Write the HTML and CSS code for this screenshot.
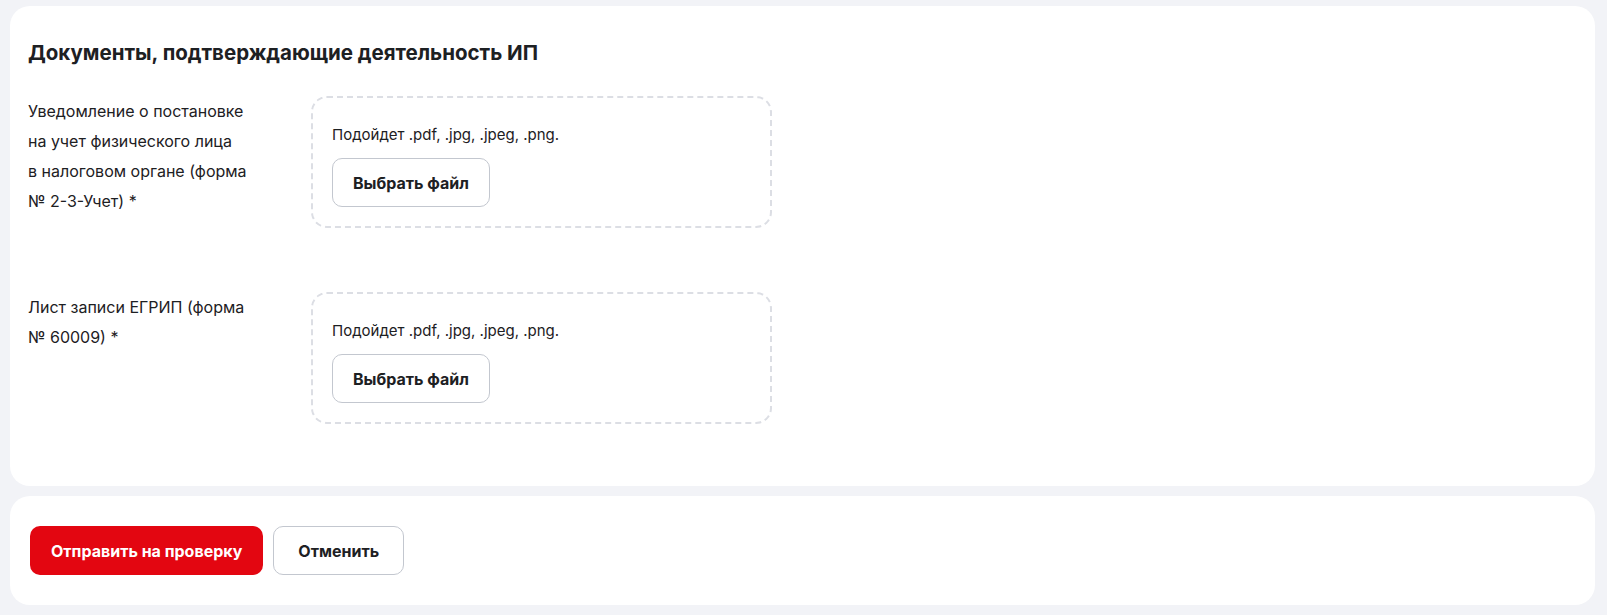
FILE: index.html
```html
<!doctype html>
<html>
<head>
	<meta charset="utf-8">
	<title>Документы ИП</title>
	<link rel="stylesheet" href="styles.css">
</head>

<body>
	<div class="page">
		<section class="card docs">
			<h2 class="docs-title">Документы, подтверждающие деятельность ИП</h2>

			<div class="doc-row">
				<div class="doc-label">Уведомление о постановке<br>на учет физического лица<br>в налоговом органе (форма<br>№ 2-3-Учет) *</div>
				<div class="dropzone">
					<p class="dropzone-hint">Подойдет .pdf, .jpg, .jpeg, .png.</p>
					<button class="btn btn-outline" type="button">Выбрать файл</button>
				</div>
			</div>

			<div class="doc-row">
				<div class="doc-label">Лист записи ЕГРИП (форма<br>№ 60009) *</div>
				<div class="dropzone">
					<p class="dropzone-hint">Подойдет .pdf, .jpg, .jpeg, .png.</p>
					<button class="btn btn-outline" type="button">Выбрать файл</button>
				</div>
			</div>
		</section>

		<section class="card actions">
			<button class="btn btn-red" type="button">Отправить на проверку</button>
			<button class="btn btn-outline" type="button">Отменить</button>
		</section>
	</div>
</body>
</html>
```

FILE: styles.css
```css
html{
	background-color: #f2f3f7;
}
body,html{
	padding: 0;
	margin: 0;
	font-family: Inter, "Noto Sans", sans-serif;
	color: #1d2023;
}
.page{
	display: flex;
	flex-direction: column;
	gap: 10px;
	padding: 6px 12px 9px 10px;
}
.card{
	background: #fff;
	border-radius: 20px;
}
.docs{
	padding: 33px 18px 62px;
	display: flex;
	flex-direction: column;
	gap: 64px;
}
.docs-title{
	margin: 0 0 -35px;
	font-size: 20.5px;
	line-height: 28px;
	font-weight: 700;
}
.doc-row{
	display: grid;
	grid-template-columns: 283px 461px;
	align-items: start;
}
.doc-label{
	font-size: 16px;
	line-height: 30px;
}
.dropzone{
	border: 2px dashed #dcdee4;
	border-radius: 16px;
	padding: 25px 19px 19px;
	height: 132px;
	box-sizing: border-box;
}
.dropzone-hint{
	margin: 0 0 11px;
	font-size: 15px;
	line-height: 24px;
}
.btn{
	display: inline-flex;
	align-items: center;
	justify-content: center;
	height: 49px;
	box-sizing: border-box;
	border-radius: 10px;
	font-family: inherit;
	font-size: 16px;
	font-weight: 700;
	color: #1d2023;
	cursor: pointer;
}
.btn-outline{
	background: #fff;
	border: 1px solid #c3c7cf;
	padding: 0 20px;
}
.btn-red{
	background: #e30611;
	border: 0;
	color: #fff;
	padding: 0 21px;
}
.actions{
	display: flex;
	gap: 10px;
	padding: 30px 20px;
}
.actions .btn-outline{
	padding: 0 24px;
}
```
